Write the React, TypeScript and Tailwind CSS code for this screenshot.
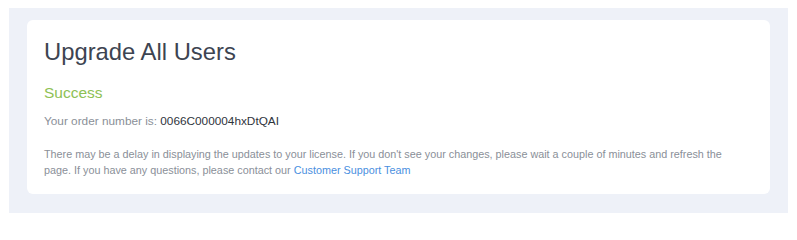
import React from "react";

export default function App() {
  return (
    <div className="w-[797px] h-[222px] bg-white pt-2 pl-[9px] pr-[9px] font-['Liberation_Sans',Arial,sans-serif]">
      <div className="bg-[#eef1f8] pt-3 pb-[19px] pl-[18px] pr-[18px]">
        <div className="bg-white rounded-md pl-[17px] pr-4 pt-[18px] pb-[16px]">
          <h1 className="text-[23.8px] leading-[28px] text-[#3d4451]">Upgrade All Users</h1>
          <div className="mt-[17px] text-[15.5px] leading-[20px] text-[#8dc154]">Success</div>
          <div className="mt-[10px] text-[11.8px] leading-[16px] text-[#8a8f98]">
            Your order number is: <span className="text-[#2f343c]">0066C000004hxDtQAI</span>
          </div>
          <p className="mt-[17px] max-w-[695px] text-[10.8px] leading-[16px] text-[#8a8f98]">
            There may be a delay in displaying the updates to your license. If you don't see your changes, please wait a couple of minutes and refresh the page. If you have any questions, please contact our{" "}
            <a className="text-[#4a8fe0]">Customer Support Team</a>
          </p>
        </div>
      </div>
    </div>
  );
}
